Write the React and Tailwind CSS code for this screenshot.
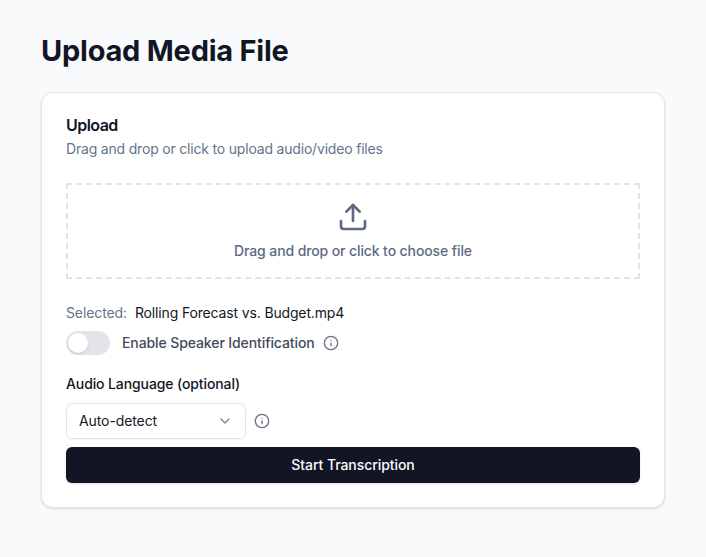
import React from "react";
import { Upload, Info, ChevronDown } from "lucide-react";

export default function App() {
  return (
    <main className="min-h-screen bg-[#f8fafc] px-[41px] pt-[33px] font-['Inter','Liberation_Sans',sans-serif] text-sm text-[#121624]">
      <h1 className="mb-[23px] text-[29px] font-bold leading-9 tracking-[-0.23px]">Upload Media File</h1>
      <section className="w-[624px] rounded-xl border border-[#e1e6ee] bg-white p-6 shadow">
        <h2 className="text-base font-semibold leading-none tracking-[-0.55px]">Upload</h2>
        <p className="mt-1.5 tracking-[-0.19px] text-[#64748b]">Drag and drop or click to upload audio/video files</p>
        <div className="mt-6 flex flex-col items-center gap-2 border-2 border-dashed border-[#e0e4ed] p-4 font-medium tracking-[-0.11px] text-[#5d6984]">
          <Upload className="size-8" />
          <span>Drag and drop or click to choose file</span>
        </div>
        <div className="mt-6 flex gap-2">
          <span className="tracking-[-0.11px] text-[#64748b]">Selected:</span>
          <span className="tracking-[-0.15px]">Rolling Forecast vs. Budget.mp4</span>
        </div>
        <div className="mt-2 flex items-center">
          <button className="flex h-6 w-11 items-center rounded-full border-2 border-transparent bg-[#e3e4ea]" role="switch" aria-checked="false">
            <span className="size-5 rounded-full bg-white shadow-sm" />
          </button>
          <span className="ml-3 font-medium tracking-[-0.1px] text-[#414b5b]">Enable Speaker Identification</span>
          <Info className="ml-2 size-4 text-[#6b7280]" />
        </div>
        <label className="mt-[19px] block font-medium tracking-[-0.11px]">Audio Language (optional)</label>
        <div className="mt-[9px] flex items-center gap-2">
          <button className="flex h-9 w-[180px] items-center justify-between rounded-md border border-[#e1e6ee] px-3 shadow-xs">
            <span className="tracking-[-0.1px]">Auto-detect</span>
            <ChevronDown className="size-4 text-[#85888f]" />
          </button>
          <Info className="size-4 text-[#6b7280]" />
        </div>
        <button className="mt-2 h-9 w-full rounded-md bg-[#121624] font-medium tracking-[-0.07px] text-[#f8fafc] shadow-sm">Start Transcription</button>
      </section>
    </main>
  );
}
